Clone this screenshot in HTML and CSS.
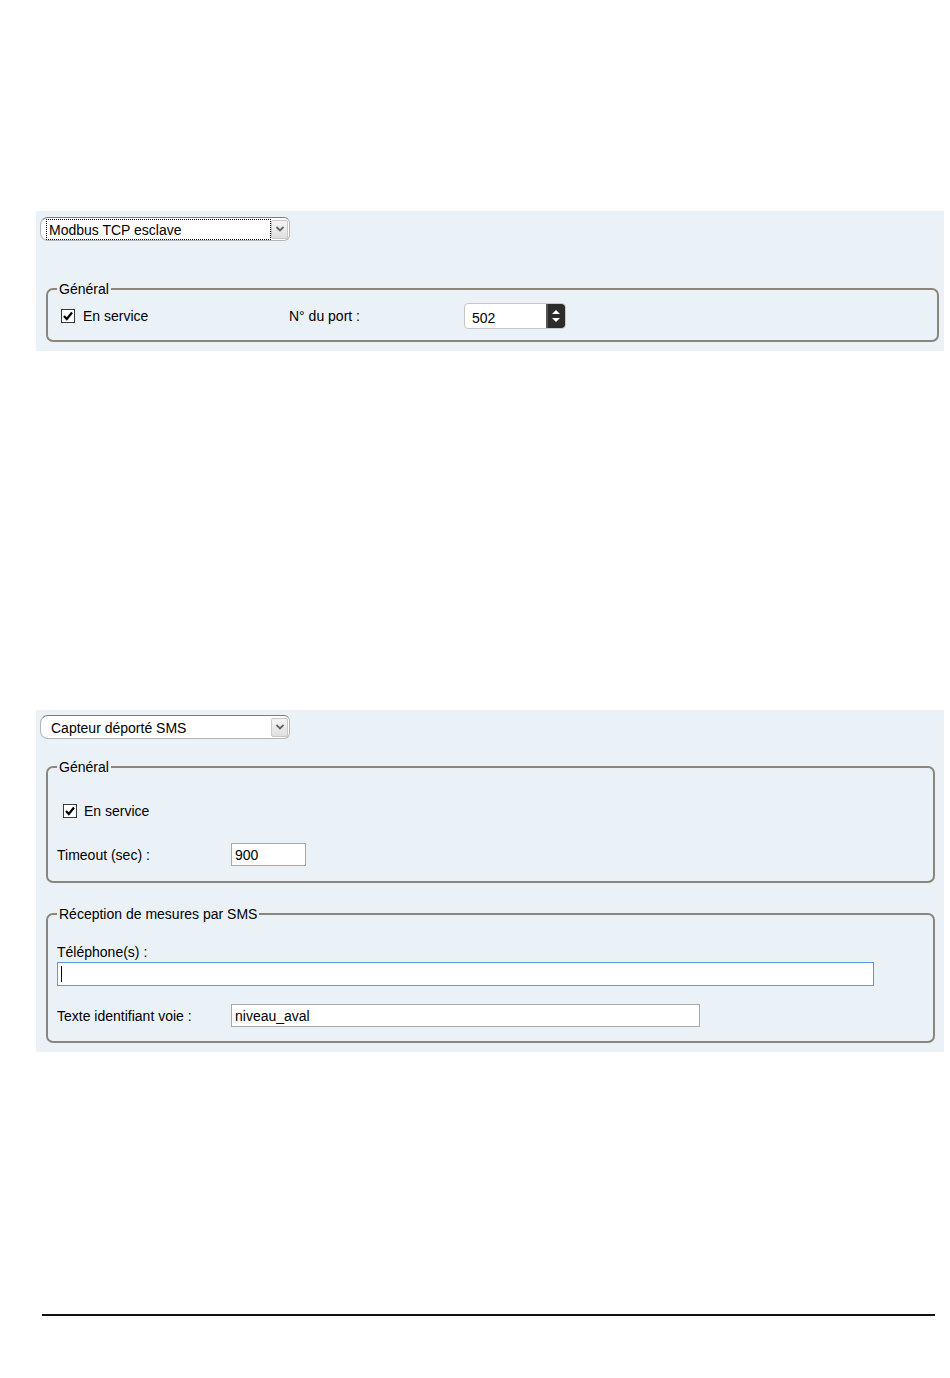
FILE: index.html
```html
<!DOCTYPE html>
<html lang="fr">
<head>
<meta charset="utf-8">
<title>Configuration</title>
<link rel="stylesheet" href="styles.css">
</head>
<body>
<div class="page">
  <section class="panel panel-modbus">
    <div class="select">
      <span class="select-text focused">Modbus TCP esclave</span>
      <span class="select-btn"><svg width="10" height="8" viewBox="0 0 10 8"><path d="M1.5 2 L5 5.5 L8.5 2" fill="none" stroke="#666" stroke-width="1.8"/></svg></span>
    </div>
    <fieldset class="group group-modbus">
      <legend>Général</legend>
      <div class="row row-port">
        <label class="check"><span class="box"><svg width="12" height="12" viewBox="0 0 12 12"><path d="M2 6 L4.8 9 L10 2.5" fill="none" stroke="#000" stroke-width="2.2"/></svg></span>En service</label>
        <span class="port-label">N° du port :</span>
        <div class="spinner">
          <span class="spinner-value">502</span>
          <span class="spinner-btn">
            <svg width="8" height="5" viewBox="0 0 8 5"><path d="M0 5 L4 1 L8 5 Z" fill="#fff"/></svg>
            <svg width="8" height="5" viewBox="0 0 8 5"><path d="M0 0 L4 4 L8 0 Z" fill="#fff"/></svg>
          </span>
        </div>
      </div>
    </fieldset>
  </section>

  <section class="panel panel-sms">
    <div class="select">
      <span class="select-text">Capteur déporté SMS</span>
      <span class="select-btn"><svg width="10" height="8" viewBox="0 0 10 8"><path d="M1.5 2 L5 5.5 L8.5 2" fill="none" stroke="#666" stroke-width="1.8"/></svg></span>
    </div>
    <fieldset class="group group-general">
      <legend>Général</legend>
      <div class="row row-check">
        <label class="check"><span class="box"><svg width="12" height="12" viewBox="0 0 12 12"><path d="M2 6 L4.8 9 L10 2.5" fill="none" stroke="#000" stroke-width="2.2"/></svg></span>En service</label>
      </div>
      <div class="row row-timeout">
        <span class="field-label">Timeout (sec) :</span>
        <span class="input input-timeout">900</span>
      </div>
    </fieldset>
    <fieldset class="group group-reception">
      <legend>Réception de mesures par SMS</legend>
      <div class="field-label stacked">Téléphone(s) :</div>
      <span class="input input-phone"><span class="caret"></span></span>
      <div class="row row-text">
        <span class="field-label">Texte identifiant voie :</span>
        <span class="input input-voie">niveau_aval</span>
      </div>
    </fieldset>
  </section>

  <hr class="footer-rule">
</div>
</body>
</html>
```

FILE: styles.css
```css
html, body {
  margin: 0;
  padding: 0;
  background: #ffffff;
}
body {
  font-family: "Liberation Sans", Arial, sans-serif;
  font-size: 14px;
  color: #000;
}
.page {
  padding-top: 211px;
}
.panel {
  margin-left: 36px;
  width: 908px;
  box-sizing: border-box;
  background: #eaf2f8;
}
.panel-modbus {
  padding: 6px 5px 9px 4px;
}
.panel-sms {
  margin-top: 359px;
  padding: 5px 9px 9px 4px;
}

/* select */
.select {
  display: flex;
  align-items: center;
  width: 250px;
  height: 24px;
  box-sizing: border-box;
  background: #fff;
  border: 1px solid #b4b4b4;
  border-top-color: #7d7d7d;
  border-radius: 8px 6px 6px 8px;
  padding: 0 1px 0 5px;
}
.select-text {
  flex: 1;
  height: 21px;
  line-height: 19px;
  padding-top: 2px;
  padding-left: 3px;
  box-sizing: border-box;
}
.panel-sms .select-text {
  padding-left: 5px;
}
.select-text.focused {
  outline: 1px dotted #000;
  outline-offset: -1px;
  padding-left: 3px;
}
.select-btn {
  width: 17px;
  height: 19px;
  box-sizing: border-box;
  border: 1px solid #c8c8c8;
  border-radius: 2px;
  background: linear-gradient(#f4f4f4, #e0e0e0);
  display: flex;
  align-items: center;
  justify-content: center;
}

/* fieldsets */
.group {
  margin: 0;
  border: 2px solid #8c857c;
  border-radius: 7px;
  padding: 0 9px;
  min-width: 0;
}
.group legend {
  padding: 0 2px;
  line-height: 16px;
  color: #000;
}
.group-modbus {
  margin-top: 40px;
  margin-left: 6px;
  padding-top: 6px;
  padding-bottom: 11px;
}
.group-general {
  margin-top: 20px;
  margin-left: 6px;
  padding-top: 27px;
  padding-bottom: 15px;
}
.group-reception {
  margin-top: 23px;
  margin-left: 6px;
  padding-top: 22px;
  padding-bottom: 14px;
}

.row {
  display: flex;
  align-items: center;
}
.row-port {
  height: 26px;
}
.check {
  display: flex;
  align-items: center;
  width: 232px;
}
.box {
  width: 12px;
  height: 12px;
  border: 1px solid #3a3a3a;
  background: #fff;
  margin: 0 8px 0 4px;
  display: flex;
  align-items: center;
  justify-content: center;
}
.row-check {
  height: 18px;
}
.group-general .box {
  margin-left: 6px;
  margin-right: 7px;
}
.port-label {
  width: 175px;
}
.spinner {
  width: 102px;
  height: 26px;
  box-sizing: border-box;
  border: 1px solid #c6c6c6;
  border-radius: 4px;
  background: #fff;
  display: flex;
  overflow: hidden;
}
.spinner-value {
  flex: 1;
  padding-left: 7px;
  line-height: 26px;
  margin-top: 1px;
}
.spinner-btn {
  width: 19px;
  background: linear-gradient(90deg, #555 0, #555 2px, #2c2c2c 2px);
  display: flex;
  flex-direction: column;
  align-items: center;
  justify-content: center;
  gap: 4px;
  border-radius: 0 3px 3px 0;
}

.field-label {
  width: 174px;
  flex: none;
}
.stacked {
  width: auto;
  line-height: 16px;
  margin-bottom: 2px;
}
.input {
  display: block;
  box-sizing: border-box;
  background: #fff;
  border: 1px solid #a9a9a9;
  height: 23px;
  line-height: 21px;
  padding-left: 3px;
  padding-top: 1px;
}
.row-timeout {
  margin-top: 23px;
}
.input-timeout {
  width: 75px;
}
.input-phone {
  width: 817px;
  height: 24px;
  border-color: #5a9be0;
  position: relative;
}
.caret {
  position: absolute;
  left: 3px;
  top: 3px;
  width: 1px;
  height: 16px;
  background: #000;
}
.row-text {
  margin-top: 18px;
}
.input-voie {
  width: 469px;
}

.footer-rule {
  margin: 262px 0 0 42px;
  width: 893px;
  height: 2px;
  border: 0;
  background: #111;
}
```
